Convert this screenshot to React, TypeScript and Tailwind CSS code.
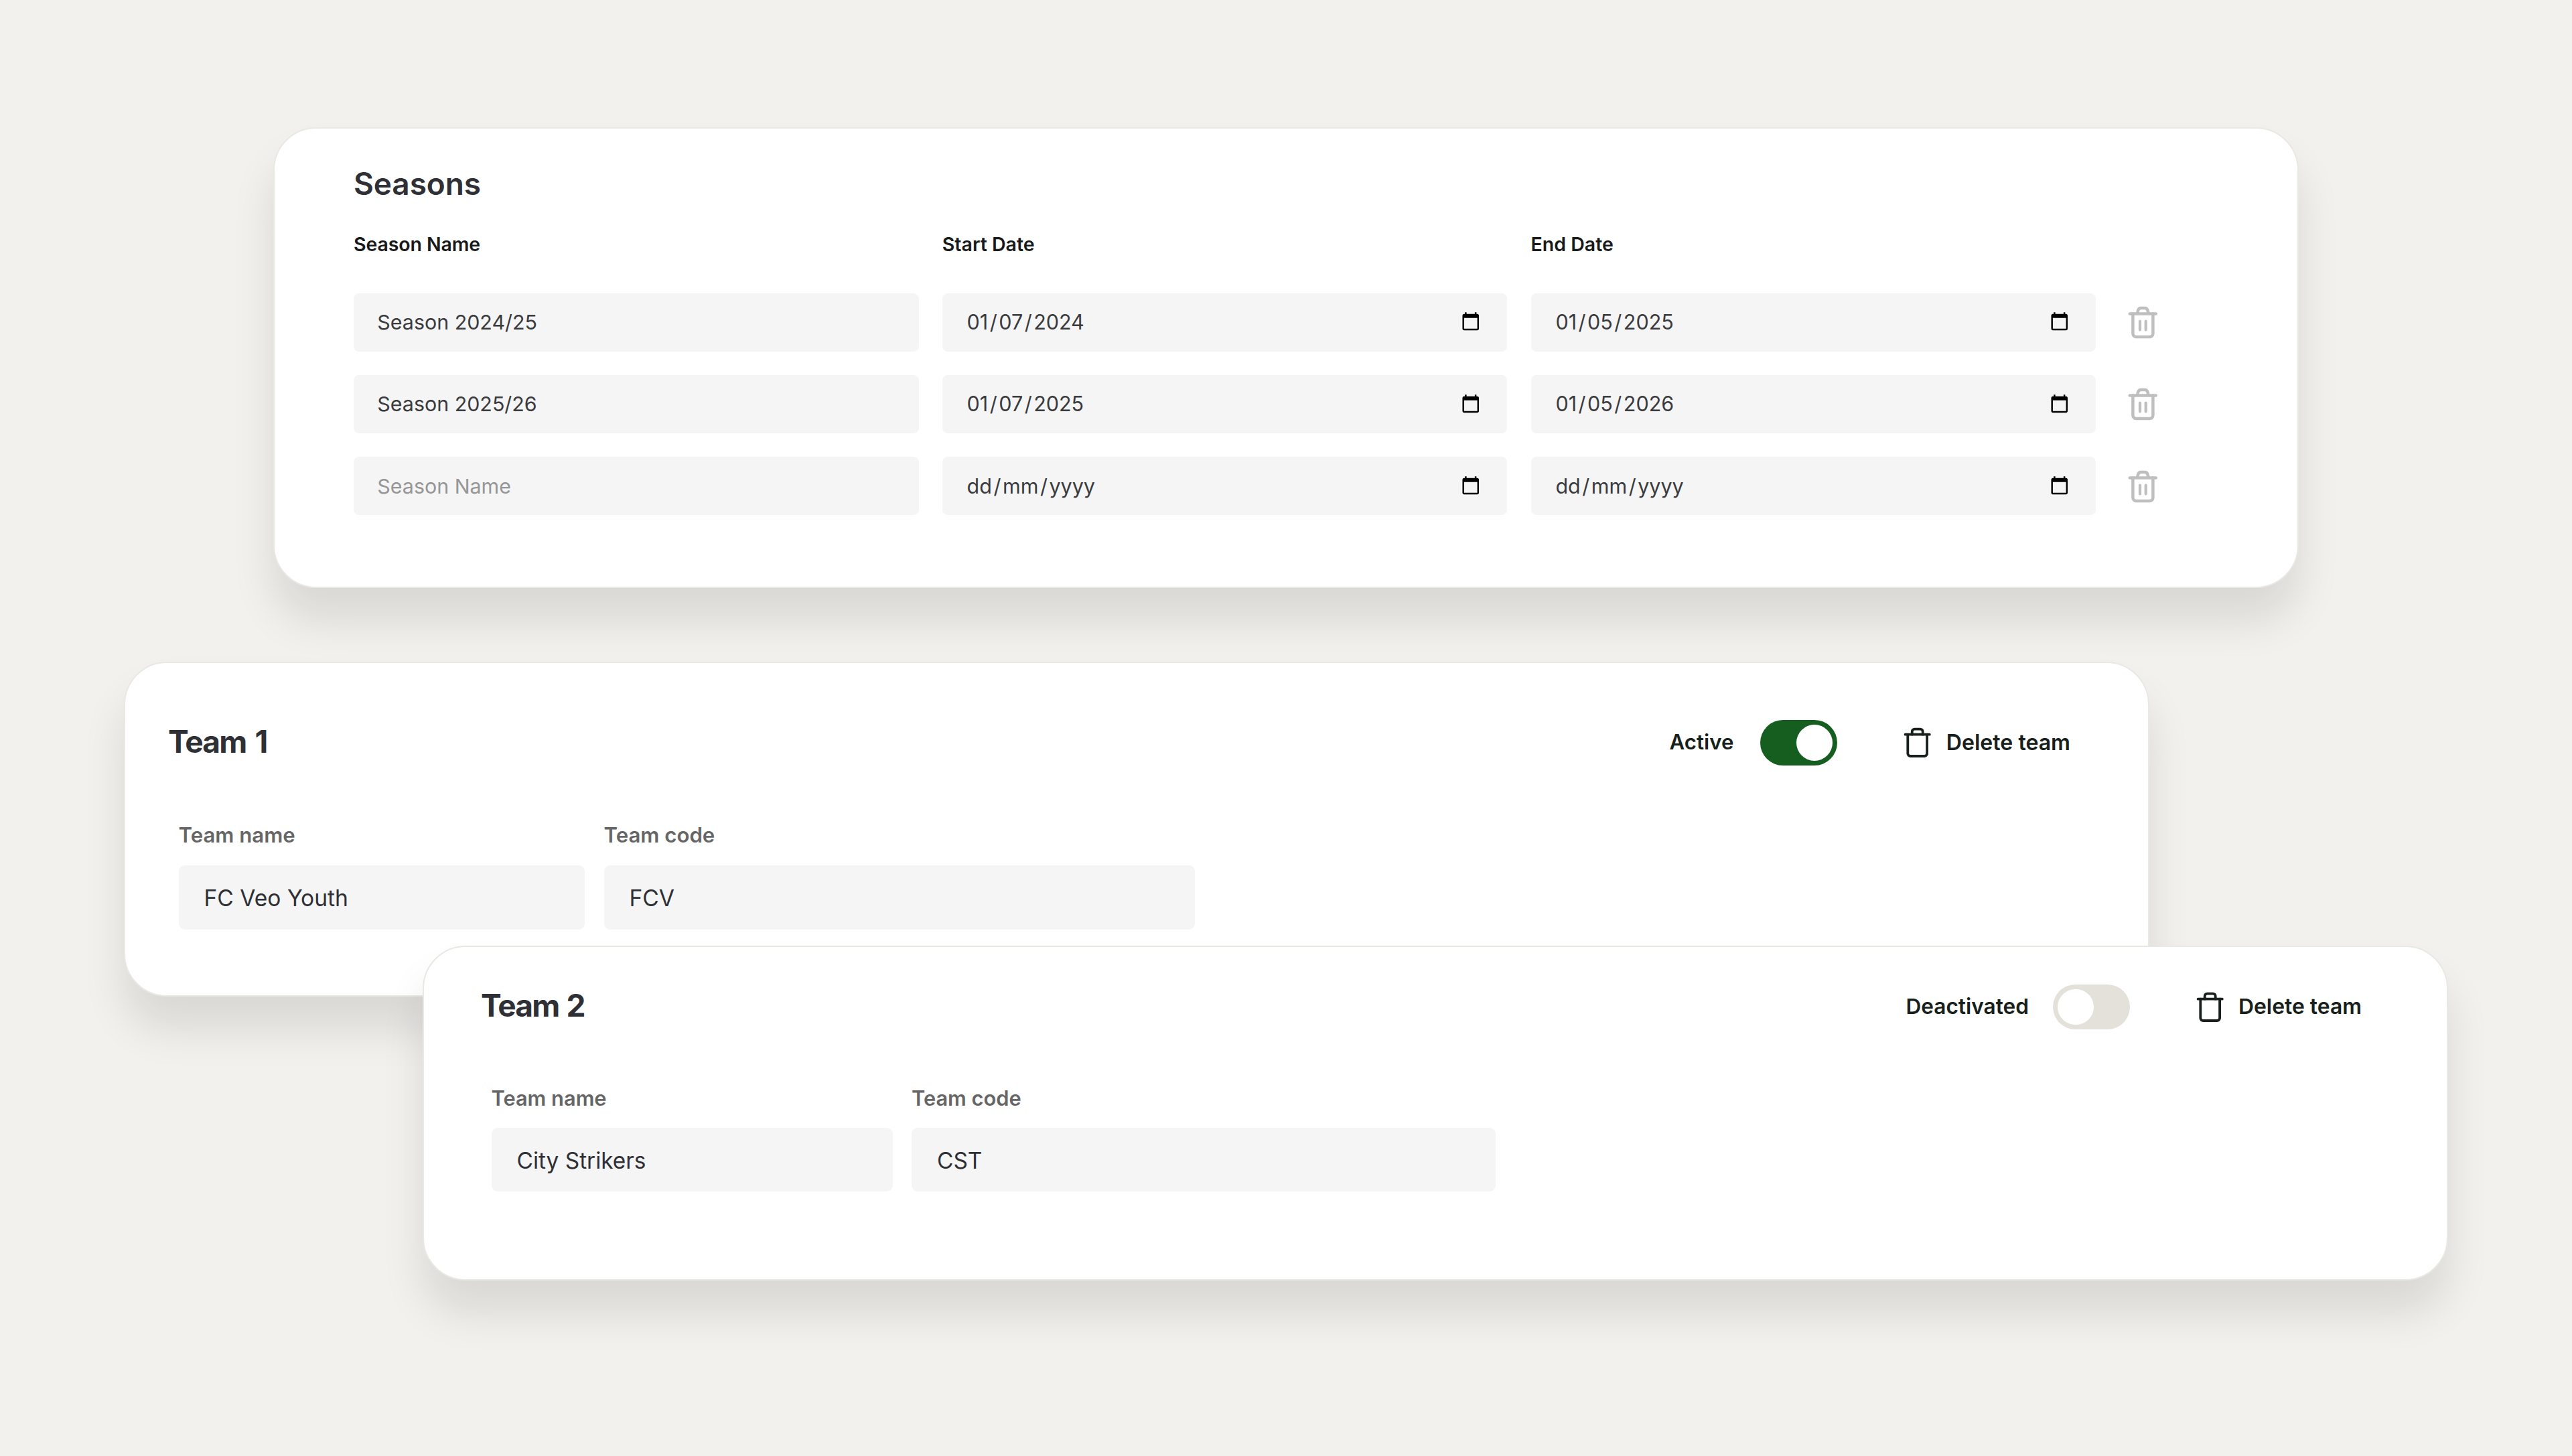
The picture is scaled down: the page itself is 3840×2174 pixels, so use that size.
import clsx from "clsx";

const CARD =
  "w-[3024px] shrink-0 rounded-[64px] border-2 border-[#e9e8e3] bg-white shadow-[0_48px_64px_rgba(0,0,0,0.105)]";

function CalendarIcon() {
  return (
    <svg viewBox="0 0 24 24" className="-mt-[2px] size-[29.5px] shrink-0 fill-black">
      <path d="M20 3h-1V1h-2v2H7V1H5v2H4c-1.1 0-2 .9-2 2v16c0 1.1.9 2 2 2h16c1.1 0 2-.9 2-2V5c0-1.1-.9-2-2-2zm0 18H4V8h16v13z" />
    </svg>
  );
}

function RowTrashIcon() {
  return (
    <svg
      viewBox="0 0 48 52"
      className="h-[52px] w-[48px] shrink-0 fill-none stroke-[#bfbfbf]"
      strokeWidth={4.5}
      strokeLinecap="round"
      strokeLinejoin="round"
    >
      <path d="M4.8 13.5H43.8" />
      <path d="M9.4 13.5V43a5 5 0 0 0 5 5H34.4a5 5 0 0 0 5-5V13.5" />
      <path d="M16.2 12.5L17 8.8Q17.8 5 21.5 5H27Q30.8 5 31.6 8.8L32.5 12.5" />
      <path d="M20 24.5V37.5M28.7 24.5V37.5" strokeWidth={4.2} />
    </svg>
  );
}

function TrashIcon() {
  return (
    <svg
      viewBox="0 0 44 48"
      className="h-[48px] w-[44px] shrink-0 fill-none stroke-[#17201a]"
      strokeWidth={3.8}
      strokeLinecap="round"
      strokeLinejoin="round"
    >
      <path d="M3.6 11.7H39.8" />
      <path d="M7.3 11.7V40a4 4 0 0 0 4 4H32.1a4 4 0 0 0 4-4V11.7" />
      <path d="M13.7 11.7V7.4a3.8 3.8 0 0 1 3.8-3.8H25.9a3.8 3.8 0 0 1 3.8 3.8V11.7" />
    </svg>
  );
}

function DateField({ value }: { value: string }) {
  const [day, month, year] = value.split("/");
  return (
    <div className="flex h-[87px] items-center justify-between rounded-[8px] bg-[#f5f5f5] pr-[40px] pl-[34.3px] text-[30.5px] leading-10 text-[#3a3b3e]">
      <div className="flex">
        <span className="px-[2.5px]">{day}</span>/<span className="px-[2.5px]">{month}</span>/
        <span className="px-[2.5px]">{year}</span>
      </div>
      <CalendarIcon />
    </div>
  );
}

const seasons = [
  { name: "Season 2024/25", start: "01/07/2024", end: "01/05/2025" },
  { name: "Season 2025/26", start: "01/07/2025", end: "01/05/2026" },
  { name: "", start: "dd/mm/yyyy", end: "dd/mm/yyyy" },
];

function SeasonsCard() {
  return (
    <section className={clsx(CARD, "ml-[408px] h-[688px] pt-[54px] pl-[118px]")}>
      <h2 className="text-[46px] leading-[56px] font-semibold tracking-[-0.1px] text-[#2e3035]">Seasons</h2>
      <div className="mt-[43px] grid grid-cols-[843.5px_843.5px_843.5px] gap-x-[35.3px] text-[28.5px] leading-10 font-semibold text-[#18191a]">
        <span className="tracking-[-0.1px]">Season Name</span>
        <span>Start Date</span>
        <span>End Date</span>
      </div>
      <div className="mt-[52.7px] flex flex-col gap-[35.3px]">
        {seasons.map((s, i) => (
          <div
            key={i}
            className="grid h-[87px] grid-cols-[843.5px_843.5px_843.5px_60px] items-center gap-x-[35.3px]"
          >
            <div
              className={clsx(
                "flex h-[87px] items-center rounded-[8px] bg-[#f5f5f5] pl-[35.3px] text-[30.4px] leading-10",
                s.name ? "text-[#3a3b3e]" : "text-[#969696]"
              )}
            >
              {s.name || "Season Name"}
            </div>
            <DateField value={s.start} />
            <DateField value={s.end} />
            <div className="pl-[11px]">
              <RowTrashIcon />
            </div>
          </div>
        ))}
      </div>
    </section>
  );
}

function Switch({ on }: { on: boolean }) {
  return (
    <div
      className={clsx(
        "flex w-[115px] items-center rounded-full px-[7px]",
        on ? "h-[68px] justify-end bg-[#155e20]" : "h-[67px] justify-start bg-[#e3e1da]"
      )}
    >
      <div className="size-[53.5px] rounded-full bg-white" />
    </div>
  );
}

type TeamProps = {
  title: string;
  active: boolean;
  name: string;
  code: string;
  cardClass: string;
  headClass: string;
  titleClass: string;
  statusClass: string;
  deleteClass: string;
  columnsClass: string;
  labelClass: string;
  fieldClass: string;
};

function TeamCard(p: TeamProps) {
  const field = clsx("flex items-center rounded-[9px] bg-[#f5f5f5] pt-[2px] pl-[38px] text-[#2e3035]", p.fieldClass);
  return (
    <section className={clsx(CARD, "h-[500px]", p.cardClass)}>
      <div className={clsx("flex items-center justify-between", p.headClass)}>
        <h2 className={clsx("text-[46px] leading-[56px] font-bold text-[#2e3035]", p.titleClass)}>{p.title}</h2>
        <div className="flex items-center leading-10 font-semibold text-[#17201a]">
          <span className={p.statusClass}>{p.active ? "Active" : "Deactivated"}</span>
          <Switch on={p.active} />
          <div className={clsx("flex items-center", p.deleteClass)}>
            <TrashIcon />
            <span className="pb-px">Delete team</span>
          </div>
        </div>
      </div>
      <div className={clsx("ml-[15.5px] grid", p.columnsClass)}>
        <span className={clsx("leading-10 font-semibold text-[#666666]", p.labelClass)}>Team name</span>
        <span className={clsx("leading-10 font-semibold text-[#666666]", p.labelClass)}>Team code</span>
        <div className={field}>{p.name}</div>
        <div className={field}>{p.code}</div>
      </div>
    </section>
  );
}

export default function App() {
  return (
    <main className="flex h-[2174px] w-[3840px] flex-col overflow-hidden bg-[#f2f1ed] pt-[190px] font-['Inter',sans-serif]">
      <SeasonsCard />
      <TeamCard
        title="Team 1"
        active
        name="FC Veo Youth"
        code="FCV"
        cardClass="mt-[110px] ml-[185px] pt-[85px] pr-[116px] pl-[64px]"
        headClass="h-[68px]"
        titleClass="pb-[4px] tracking-[-1.8px] [word-spacing:4px]"
        statusClass="mr-[39.5px] pb-[2px] text-[31.2px]"
        deleteClass="ml-[98px] gap-[21px] text-[32.1px]"
        columnsClass="mt-[84px] grid-cols-[606px_882px] gap-x-[29px] gap-y-[24.5px]"
        labelClass="text-[31.2px]"
        fieldClass="h-[96.5px] text-[33.6px]"
      />
      <TeamCard
        title="Team 2"
        active={false}
        name="City Strikers"
        code="CST"
        cardClass="-mt-[76px] ml-[631px] pt-[56px] pr-[127px] pl-[85px]"
        headClass="h-[67px]"
        titleClass="pb-[5px] tracking-[-1.8px] [word-spacing:2px]"
        statusClass="mr-[36.5px] pb-[2px] text-[31.6px]"
        deleteClass="ml-[97.5px] gap-[20px] text-[31.9px]"
        columnsClass="mt-[83px] grid-cols-[599px_871.5px] gap-x-[28.5px] gap-y-[24.2px]"
        labelClass="text-[30.8px]"
        fieldClass="h-[95px] text-[33.4px]"
      />
    </main>
  );
}
